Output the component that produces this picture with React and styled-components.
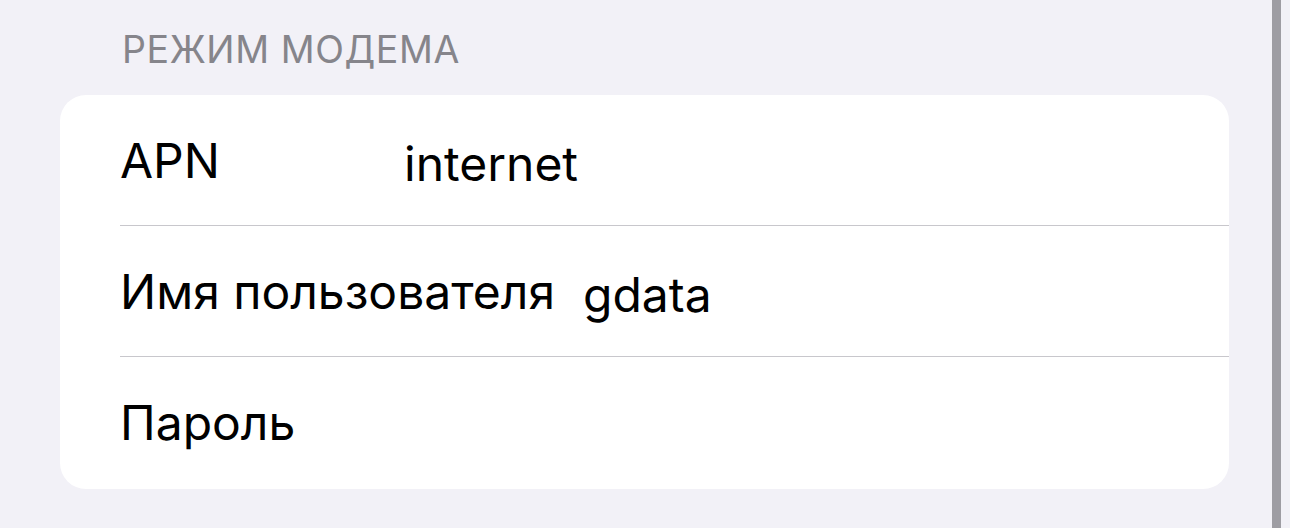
import React from "react";
import styled, { createGlobalStyle } from "styled-components";

const GlobalStyle = createGlobalStyle`
    html, body {
        margin: 0;
        padding: 0;
        background: #f2f1f7;
    }
    body {
        font-family: Inter, "Noto Sans", sans-serif;
        -webkit-font-smoothing: antialiased;
    }
`

const Page = styled.div`
        position: relative;
        height: 528px;
        padding: 0 61px 0 60px;
        overflow: hidden;
    `
const SectionTitle = styled.div`
        padding: 28px 0 23px 62px;
        font-size: 37.5px;
        line-height: 44px;
        color: #86858b;
        letter-spacing: 0.6px;
        text-transform: uppercase;
    `
const Card = styled.div`
        background: #ffffff;
        border-radius: 26px;
        padding-bottom: 2px;
        overflow: hidden;
    `
const Row = styled.div`
        display: flex;
        align-items: center;
        gap: 28px;
        height: 130px;
        margin-left: 60px;
        font-size: 48px;
        color: #000000;

        & + & {
            border-top: 1px solid #c8c7cc;
        }
    `
const Label = styled.span`
        min-width: 256px;
        white-space: nowrap;
    `
const Value = styled.span`
        padding-top: 6px;
        white-space: nowrap;
    `
const ScrollIndicator = styled.div`
        position: absolute;
        top: 0;
        right: 9px;
        width: 9px;
        height: 100%;
        background: #9e9da3;
    `

const fields = [
    { label: "APN", value: "internet" },
    { label: "Имя пользователя", value: "gdata" },
    { label: "Пароль", value: "" },
];


export default class App extends React.Component {

    render() {
        return (
            <>
                <GlobalStyle />
                <Page>
                    <SectionTitle>Режим модема</SectionTitle>
                    <Card>
                        {fields.map(f => (
                            <Row key={f.label}>
                                <Label>{f.label}</Label>
                                {f.value && <Value>{f.value}</Value>}
                            </Row>
                        ))}
                    </Card>
                    <ScrollIndicator />
                </Page>
            </>
        )
    }
}
